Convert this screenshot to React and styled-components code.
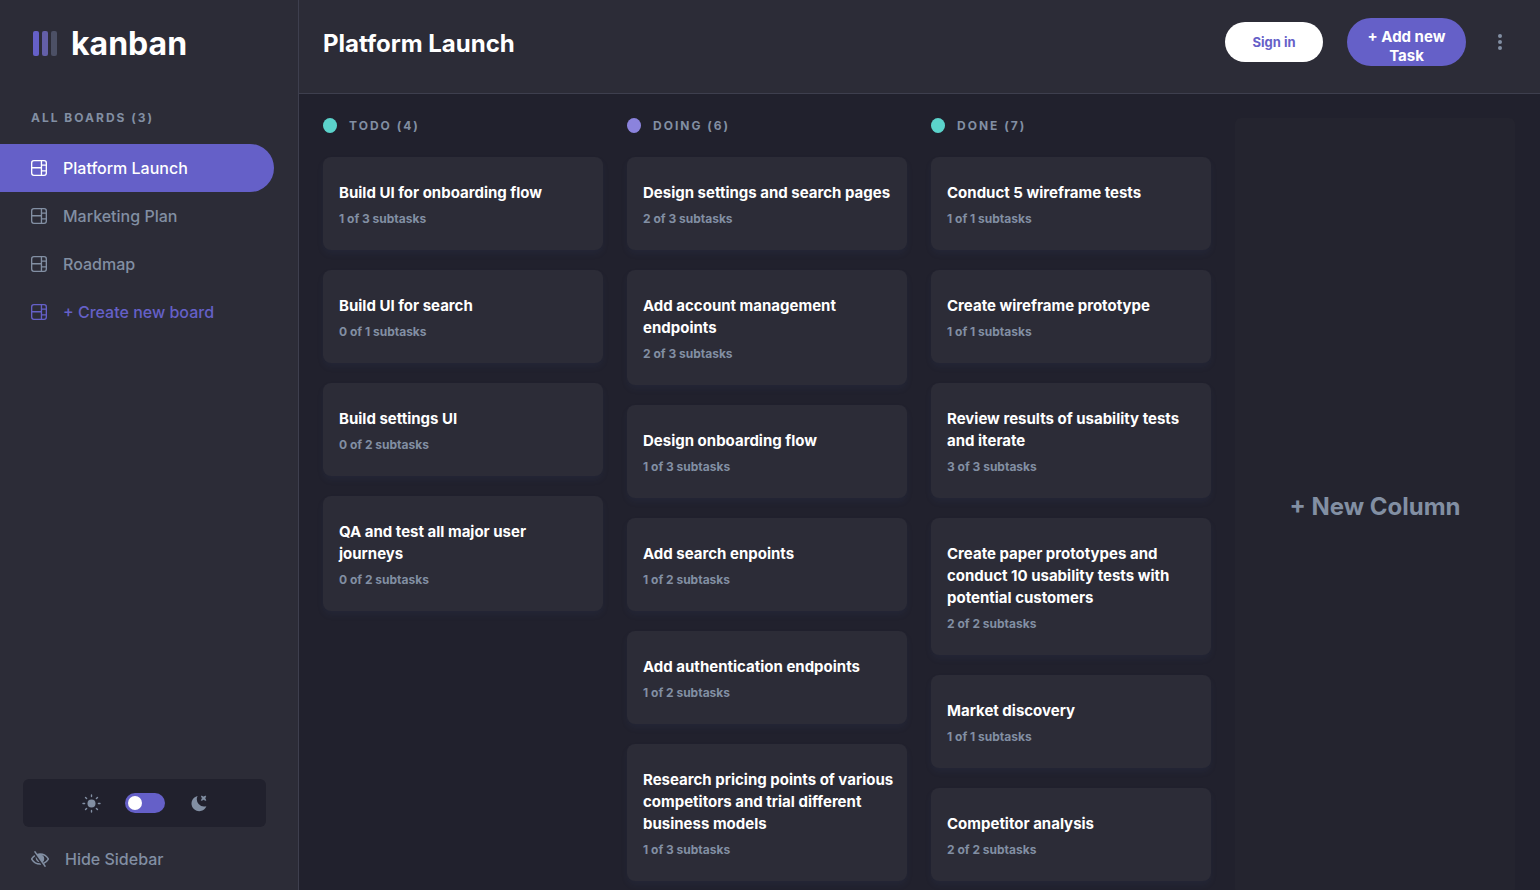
import React, { useState } from "react";
import styled, { createGlobalStyle } from "styled-components";

const GlobalStyle = createGlobalStyle`
    * {
        box-sizing: border-box;
    }

    body {
        margin: 0;
        background-color: #21212d;
        color: #fff;
        font-family: Inter, sans-serif;
        -webkit-font-smoothing: antialiased;
    }

    h1, h2, h3, p, ul {
        margin: 0;
        padding: 0;
        list-style: none;
    }

    button {
        border: none;
        background: none;
        font-family: inherit;
        cursor: pointer;
    }
`

const Page = styled.div`
    display: flex;
    height: 100vh;
    overflow: hidden;
`

const Sidebar = styled.aside`
    flex: none;
    display: flex;
    flex-direction: column;
    width: 299px;
    background-color: #2c2c37;
    border-right: 1px solid #3e3f4e;
`

const Logo = styled.div`
    display: flex;
    align-items: center;
    gap: 14px;
    height: 86px;
    padding-left: 33px;
    font-size: 32px;
    font-weight: 700;
`

const SectionLabel = styled.h2`
    padding: 24px 31px 18px;
    font-size: 12px;
    line-height: 16px;
    font-weight: 700;
    letter-spacing: 2px;
    color: #828fa3;
`

const BoardButton = styled.button`
    display: flex;
    align-items: center;
    gap: 16px;
    width: 274px;
    height: 48px;
    padding: 0 31px;
    border-radius: 0 24px 24px 0;
    font-size: 16px;
    font-weight: 500;
    color: ${(props) => props.$color || "#828fa3"};
    background-color: ${(props) => (props.$active ? "#6560c8" : "transparent")};
`

const ThemeBox = styled.div`
    display: flex;
    justify-content: center;
    align-items: center;
    gap: 24px;
    height: 48px;
    margin: auto 32px 8px 23px;
    border-radius: 6px;
    background-color: #21212d;
`

const Switch = styled.input`
    appearance: none;
    display: flex;
    align-items: center;
    width: 40px;
    height: 20px;
    margin: 0;
    padding: 3px;
    border-radius: 10px;
    background-color: #6560c8;
    cursor: pointer;

    &::before {
        content: "";
        width: 14px;
        height: 14px;
        border-radius: 50%;
        background-color: #fff;
    }

    &:checked {
        justify-content: flex-end;
    }
`

const HideButton = styled.button`
    display: flex;
    align-items: center;
    gap: 16px;
    height: 48px;
    padding: 0 31px;
    margin-bottom: 7px;
    font-size: 16px;
    font-weight: 500;
    color: #828fa3;
`

const Main = styled.main`
    flex: 1;
    min-width: 0;
    display: flex;
    flex-direction: column;
`

const Header = styled.header`
    flex: none;
    display: flex;
    align-items: center;
    gap: 24px;
    height: 94px;
    padding: 0 24px 10px;
    background-color: #2c2c37;
    border-bottom: 1px solid #3e3f4e;
`

const Title = styled.h1`
    flex: 1;
    padding-top: 4px;
    font-size: 24px;
    line-height: 32px;
    font-weight: 700;
`

const SignInButton = styled.button`
    width: 98px;
    height: 40px;
    border-radius: 20px;
    background-color: #fff;
    color: #6560c8;
    font-size: 13px;
    font-weight: 700;
`

const AddTaskButton = styled.button`
    width: 119px;
    height: 48px;
    padding: 8px 16px 0;
    border-radius: 24px;
    background-color: #6560c8;
    color: #fff;
    font-size: 15px;
    line-height: 19px;
    font-weight: 700;
`

const MenuButton = styled.button`
    display: flex;
    justify-content: center;
    width: 20px;
    padding: 0;
    margin-right: 6px;
`

const Board = styled.div`
    flex: 1;
    min-height: 0;
    display: flex;
    gap: 24px;
    padding: 24px 24px 0;
    overflow: auto;
    scrollbar-width: none;
`

const Column = styled.section`
    flex: none;
    width: 280px;
`

const ColumnHeader = styled.h2`
    display: flex;
    align-items: center;
    gap: 12px;
    margin-bottom: 24px;
    font-size: 12px;
    line-height: 15px;
    font-weight: 700;
    letter-spacing: 2px;
    color: #828fa3;
`

const Dot = styled.span`
    width: 14px;
    height: 15px;
    border-radius: 50%;
    background-color: ${(props) => props.$color};
`

const CardList = styled.ul`
    display: flex;
    flex-direction: column;
    gap: 20px;
    padding-bottom: 24px;
`

const Card = styled.li`
    padding: 25px 12px 24px 16px;
    border-radius: 8px;
    background-color: #2c2c37;
    box-shadow: 0 4px 6px rgba(54, 78, 126, 0.1);
`

const CardTitle = styled.h3`
    font-size: 15px;
    line-height: 22px;
    font-weight: 700;
`

const Subtasks = styled.p`
    margin-top: 7px;
    font-size: 12px;
    line-height: 15px;
    font-weight: 700;
    color: #828fa3;
`

const NewColumn = styled.button`
    flex: none;
    width: 280px;
    height: 776px;
    min-height: 100%;
    border-radius: 6px;
    background-color: #24242f;
    color: #828fa3;
    font-size: 24px;
    font-weight: 700;
`

const boards = ["Platform Launch", "Marketing Plan", "Roadmap"]

const columns = [
    {
        name: "TODO",
        color: "#5bd3cb",
        count: 4,
        tasks: [
            ["Build UI for onboarding flow", 1, 3],
            ["Build UI for search", 0, 1],
            ["Build settings UI", 0, 2],
            ["QA and test all major user journeys", 0, 2],
        ],
    },
    {
        name: "DOING",
        color: "#8b83dd",
        count: 6,
        tasks: [
            ["Design settings and search pages", 2, 3],
            ["Add account management endpoints", 2, 3],
            ["Design onboarding flow", 1, 3],
            ["Add search enpoints", 1, 2],
            ["Add authentication endpoints", 1, 2],
            ["Research pricing points of various competitors and trial different business models", 1, 3],
        ],
    },
    {
        name: "DONE",
        color: "#5bd3cb",
        count: 7,
        tasks: [
            ["Conduct 5 wireframe tests", 1, 1],
            ["Create wireframe prototype", 1, 1],
            ["Review results of usability tests and iterate", 3, 3],
            ["Create paper prototypes and conduct 10 usability tests with potential customers", 2, 2],
            ["Market discovery", 1, 1],
            ["Competitor analysis", 2, 2],
        ],
    },
]

function BoardIcon() {
    return (
        <svg width="16" height="16" viewBox="0 0 16 16" fill="currentColor" aria-hidden="true">
            <path d="M0 2.889A2.889 2.889 0 0 1 2.889 0H13.11A2.889 2.889 0 0 1 16 2.889V13.11A2.888 2.888 0 0 1 13.111 16H2.89A2.889 2.889 0 0 1 0 13.111V2.89Zm1.333 5.555v4.667c0 .859.697 1.556 1.556 1.556h6.889V8.444H1.333Zm8.445-1.333V1.333h-6.89A1.556 1.556 0 0 0 1.334 2.89V7.11h8.445Zm1.333 4.445v3.11h2a1.556 1.556 0 0 0 1.556-1.555v-1.555H11.11Zm3.556-1.334V5.777H11.11v4.445h3.556Zm0-5.778V2.89a1.556 1.556 0 0 0-1.556-1.556h-2v3.111h3.556Z" />
        </svg>
    )
}

function App() {
    const [active, setActive] = useState(0)

    return (
        <Page>
            <GlobalStyle />
            <Sidebar>
                <Logo>
                    <svg width="24" height="25" viewBox="0 0 24 25" aria-hidden="true">
                        <rect width="6" height="25" rx="2" fill="#6560c8" />
                        <rect x="9" width="6" height="25" rx="2" fill="#635fa8" />
                        <rect x="18" width="6" height="25" rx="2" fill="#4c5065" />
                    </svg>
                    kanban
                </Logo>
                <SectionLabel>ALL BOARDS (3)</SectionLabel>
                <nav>
                    {boards.map((board, i) => (
                        <BoardButton
                            key={board}
                            $active={i === active}
                            $color={i === active ? "#fff" : "#828fa3"}
                            onClick={() => setActive(i)}
                        >
                            <BoardIcon />
                            {board}
                        </BoardButton>
                    ))}
                    <BoardButton $color="#6560c8">
                        <BoardIcon />
                        + Create new board
                    </BoardButton>
                </nav>
                <ThemeBox>
                    <svg width="19" height="19" viewBox="0 0 19 19" aria-hidden="true">
                        <circle cx="9.5" cy="9.5" r="4" fill="#828fa3" />
                        <path d="M9.5 1v1.6M9.5 16.4V18M1 9.5h1.6M16.4 9.5H18M3.5 3.5l1.1 1.1M14.4 14.4l1.1 1.1M3.5 15.5l1.1-1.1M14.4 4.6l1.1-1.1" stroke="#828fa3" strokeWidth="1.4" strokeLinecap="round" />
                    </svg>
                    <Switch type="checkbox" role="switch" aria-label="Light theme" />
                    <svg width="19" height="19" viewBox="0 0 19 19" aria-hidden="true">
                        <path d="M8.6 1.9A7.7 7.7 0 1 0 17.4 12.2 7.4 7.4 0 0 1 8.6 1.9Z" fill="#828fa3" />
                        <path d="m12.4 2 2.2.9 2.2-.9-.9 2.2.9 2.2-2.2-.9-2.2.9.9-2.2Z" fill="#828fa3" stroke="#828fa3" strokeWidth="0.8" />
                    </svg>
                </ThemeBox>
                <HideButton>
                    <svg width="18" height="16" viewBox="0 0 18 16" fill="currentColor" aria-hidden="true">
                        <path d="M8.522 11.223a4.252 4.252 0 0 1-3.654-5.22l3.654 5.22ZM9 12.25A8.685 8.685 0 0 1 1.5 8a8.612 8.612 0 0 1 2.76-2.864l-.86-1.23A10.112 10.112 0 0 0 .208 7.238a1.5 1.5 0 0 0 0 1.524A10.187 10.187 0 0 0 9 13.75c.414 0 .828-.025 1.239-.074l-1-1.43A8.88 8.88 0 0 1 9 12.25Zm8.792-3.488a10.14 10.14 0 0 1-4.486 4.046l1.504 2.148a.375.375 0 0 1-.092.523l-.648.453a.375.375 0 0 1-.523-.092L3.19 1.044A.375.375 0 0 1 3.282.52L3.93.068a.375.375 0 0 1 .523.092l1.735 2.479A10.308 10.308 0 0 1 9 2.25c3.746 0 7.031 2 8.792 4.988a1.5 1.5 0 0 1 0 1.524ZM16.5 8a8.674 8.674 0 0 0-6.755-4.219A4.25 4.25 0 0 1 13.25 8a4.23 4.23 0 0 1-1.654 3.365l-2.6-3.72A1.75 1.75 0 0 0 10.6 6.3l1 5.065.834.192A8.641 8.641 0 0 0 16.5 8Z" />
                    </svg>
                    Hide Sidebar
                </HideButton>
            </Sidebar>
            <Main>
                <Header>
                    <Title>Platform Launch</Title>
                    <SignInButton>Sign in</SignInButton>
                    <AddTaskButton>+ Add new Task</AddTaskButton>
                    <MenuButton aria-label="Board menu">
                        <svg width="5" height="16" viewBox="0 0 5 16" fill="#828fa3" aria-hidden="true">
                            <circle cx="2" cy="2" r="2" />
                            <circle cx="2" cy="8" r="2" />
                            <circle cx="2" cy="14" r="2" />
                        </svg>
                    </MenuButton>
                </Header>
                <Board>
                    {columns.map((column) => (
                        <Column key={column.name}>
                            <ColumnHeader>
                                <Dot $color={column.color} />
                                {column.name} ({column.count})
                            </ColumnHeader>
                            <CardList>
                                {column.tasks.map(([title, done, total]) => (
                                    <Card key={title}>
                                        <CardTitle>{title}</CardTitle>
                                        <Subtasks>{done} of {total} subtasks</Subtasks>
                                    </Card>
                                ))}
                            </CardList>
                        </Column>
                    ))}
                    <NewColumn>+ New Column</NewColumn>
                </Board>
            </Main>
        </Page>
    )
}

export default App;
